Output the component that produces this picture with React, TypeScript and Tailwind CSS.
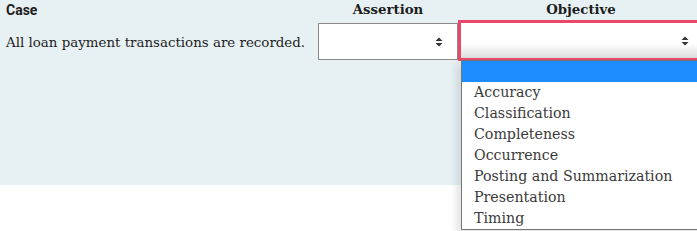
import React from 'react';

const options = [
    '',
    'Accuracy',
    'Classification',
    'Completeness',
    'Occurrence',
    'Posting and Summarization',
    'Presentation',
    'Timing',
];

function Arrows() {
    return (
        <svg width="8" height="10" viewBox="0 0 8 10" className="shrink-0" aria-hidden="true">
            <path d="M4 0.5 L7.5 4 L0.5 4 Z" fill="#333" />
            <path d="M0.5 6 L7.5 6 L4 9.5 Z" fill="#333" />
        </svg>
    );
}

export default function App() {
    return (
        <div className="w-[697px] h-[231px] overflow-hidden bg-white font-['DejaVu_Serif',serif]">
            <div className="h-[185px] w-[760px] bg-[#e7f1f4]">
                <div className="flex h-[20px] items-end text-[13.3px] font-bold text-[#1d1d1d]">
                    <div className="w-[318px] shrink-0 pl-[6px] font-['Roboto',sans-serif] text-[14px] leading-[20px]">Case</div>
                    <div className="w-[140px] shrink-0 text-center leading-[20px]">Assertion</div>
                    <div className="w-[246px] shrink-0 text-center leading-[20px]">Objective</div>
                </div>
                <div className="flex items-start">
                    <div className="w-[318px] shrink-0 overflow-hidden pl-[6px] pt-[14px] text-[13.4px] leading-[18px] text-[#1d1d1d] whitespace-nowrap">
                        All loan payment transactions are recorded.
                    </div>
                    <div className="mt-[3px] flex h-[37px] w-[140px] shrink-0 items-center justify-end border border-[#8a8a8a] bg-white pr-[14px]">
                        <Arrows />
                    </div>
                    <div className="relative w-[280px] shrink-0">
                        <div className="flex h-[41px] items-center justify-end border-[3px] border-r-0 border-[#e8496a] bg-gradient-to-b from-white from-60% to-[#dcdcdc] pr-[49px]">
                            <Arrows />
                        </div>
                        <div className="absolute left-[3px] top-[40px] w-[277px] border border-[#777] bg-white shadow-[-4px_4px_8px_rgba(0,0,0,0.12)]">
                            {options.map((o, i) => (
                                <div
                                    key={i}
                                    className={`h-[21px] pl-[12px] text-[14.2px] leading-[21px] text-[#3a3a3a] whitespace-nowrap ${
                                        i === 0 ? 'bg-[#1e8cff]' : ''
                                    }`}
                                >
                                    {o}
                                </div>
                            ))}
                        </div>
                    </div>
                </div>
            </div>
        </div>
    );
}
